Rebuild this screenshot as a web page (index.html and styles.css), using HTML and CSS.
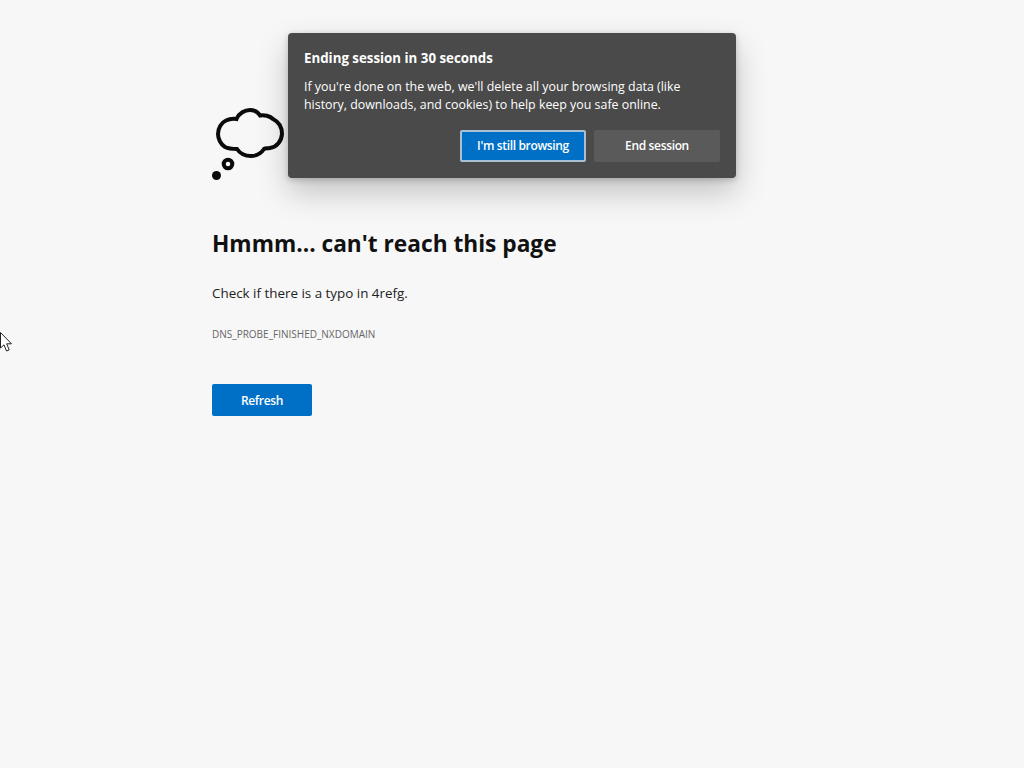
FILE: index.html
```html
<!DOCTYPE html>
<html lang="en">
<head>
<meta charset="utf-8">
<title>Can't reach this page</title>
<link rel="stylesheet" href="styles.css">
</head>
<body>
<main class="page">
  <svg class="cloud" width="72" height="73" viewBox="0 0 72 73" aria-hidden="true">
    <path class="cloud-line" d="M24.500 12C27 6 33 3 38 3C43 3 46 5.500 48 8.500C52 7.500 58 9 61 12C67 15 70 21 70 27C69.500 34 65 40 58 41C55 41.500 53.500 41 52 42C49 46.500 44 49 39 49C33 49 28 46.500 25 42C22 42 17 42 13 40C9 37.500 6 32 6 27C6 21 9.500 15.500 14 13.500C17 12 21 11.500 24.500 12Z"/>
    <circle class="cloud-ring" cx="16" cy="57" r="4.300"/>
    <circle class="cloud-dot" cx="4.500" cy="68.500" r="4.500"/>
  </svg>
  <h1 class="title">Hmmm... can't reach this page</h1>
  <p class="hint">Check if there is a typo in 4refg.</p>
  <p class="code">DNS_PROBE_FINISHED_NXDOMAIN</p>
  <button class="refresh" type="button">Refresh</button>
</main>

<section class="dialog" role="dialog">
  <h2 class="dialog-title">Ending session in 30 seconds</h2>
  <p class="dialog-text">If you're done on the web, we'll delete all your browsing data (like<br>history, downloads, and cookies) to help keep you safe online.</p>
  <div class="dialog-actions">
    <button class="btn btn-primary" type="button">I'm still browsing</button>
    <button class="btn btn-secondary" type="button">End session</button>
  </div>
</section>

<svg class="cursor" width="13" height="20" viewBox="0 0 13 20" aria-hidden="true">
  <path d="M0.500 0.500V16L4 12.800L6.500 19L9.200 17.900L6.700 11.800H11.500Z"/>
</svg>
</body>
</html>
```
FILE: styles.css
```css
html, body {
  margin: 0;
  height: 100%;
}
body {
  background: #f7f7f7;
  font-family: "Open Sans", "Noto Sans", "Liberation Sans", sans-serif;
  color: #111;
  overflow: hidden;
}
.page {
  padding: 107px 0 0 212px;
  display: flex;
  flex-direction: column;
  align-items: flex-start;
}
.cloud {
  display: block;
}
.cloud-line, .cloud-ring {
  fill: none;
  stroke: #0b0b0b;
  stroke-width: 4;
}
.cloud-dot {
  fill: #0b0b0b;
}
.title {
  margin: 46px 0 0;
  font-size: 22.700px;
  line-height: 36px;
  font-weight: 700;
  color: #111;
}
.hint {
  margin: 21px 0 0;
  font-size: 13.400px;
  line-height: 20px;
  color: #222;
}
.code {
  margin: 24px 0 0;
  font-size: 10px;
  line-height: 14px;
  color: #666;
}
.refresh {
  margin-top: 43px;
  width: 100px;
  height: 32px;
  padding: 0;
  border: 0;
  border-radius: 2px;
  background: #0070c6;
  color: #fff;
  font: 600 12px "Open Sans", "Noto Sans", sans-serif;
  letter-spacing: -0.350px;
}
.dialog {
  position: absolute;
  left: 288px;
  top: 33px;
  width: 448px;
  height: 145px;
  box-sizing: border-box;
  padding: 15px 16px 16px;
  background: #4a4a4a;
  border-radius: 4px;
  box-shadow: 0 14px 32px rgba(0, 0, 0, 0.22), 0 2px 6px rgba(0, 0, 0, 0.2);
  color: #fff;
}
.dialog-title {
  margin: 0;
  font-size: 13.300px;
  line-height: 20px;
  font-weight: 700;
}
.dialog-text {
  margin: 10px 0 0;
  font-size: 12.400px;
  line-height: 18px;
}
.dialog-actions {
  margin-top: 16px;
  display: flex;
  justify-content: flex-end;
  gap: 8px;
}
.btn {
  width: 126px;
  height: 32px;
  padding: 0 0 2px;
  box-sizing: border-box;
  border: 0;
  border-radius: 2px;
  color: #fff;
  font: 600 12px "Open Sans", "Noto Sans", sans-serif;
  letter-spacing: -0.350px;
}
.btn-primary {
  background: #0070c6;
  border: 2px solid #a9bfd3;
}
.btn-secondary {
  background: #5a5a5a;
}
.cursor {
  position: absolute;
  left: 0;
  top: 332px;
}
.cursor path {
  fill: #fff;
  stroke: #222;
  stroke-width: 1;
}
```
